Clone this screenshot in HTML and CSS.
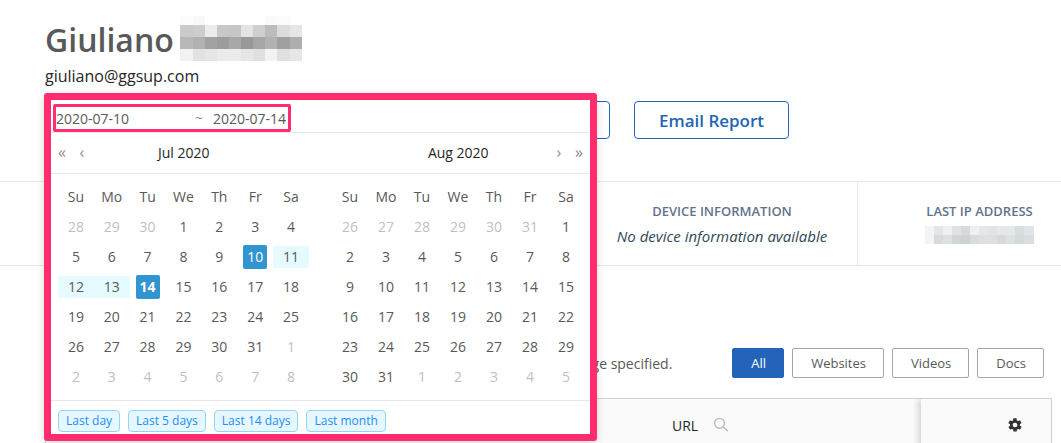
FILE: index.html
```html
<!DOCTYPE html>
<html lang="en">
<head>
<meta charset="utf-8">
<title>Giuliano</title>
<link rel="stylesheet" href="styles.css">
</head>
<body>
<header class="profile">
  <div class="name-row">
    <h1>Giuliano</h1>
    <svg class="redacted-name" width="122" height="45" viewBox="0 0 122 45" shape-rendering="crispEdges" aria-hidden="true"></svg>
  </div>
  <p class="email">giuliano@ggsup.com</p>
  <div class="actions">
    <button class="btn-outline" type="button" aria-label="Report"></button>
    <button class="btn-outline" type="button">Email Report</button>

    <div class="picker">
      <div class="picker-inputs">
        <div class="range">
          <input type="text" value="2020-07-10" aria-label="Start date">
          <span class="tilde">~</span>
          <input type="text" value="2020-07-14" aria-label="End date">
        </div>
      </div>
      <div class="picker-header">
        <div class="month-head">
          <button type="button" aria-label="Previous year">«</button>
          <button type="button" aria-label="Previous month">‹</button>
          <span class="month">Jul 2020</span>
        </div>
        <div class="month-head month-head-right">
          <span class="month">Aug 2020</span>
          <button type="button" aria-label="Next month">›</button>
          <button type="button" aria-label="Next year">»</button>
        </div>
      </div>
      <div class="picker-body">
        <table class="calendar" id="cal-left"></table>
        <table class="calendar" id="cal-right"></table>
      </div>
      <div class="picker-footer">
        <button class="tag" type="button">Last day</button>
        <button class="tag" type="button">Last 5 days</button>
        <button class="tag" type="button">Last 14 days</button>
        <button class="tag" type="button">Last month</button>
      </div>
    </div>
  </div>
</header>

<section class="stats">
  <div class="stat"></div>
  <div class="stat">
    <h2>DEVICE INFORMATION</h2>
    <p>No device information available</p>
  </div>
  <div class="stat stat-ip">
    <h2>LAST IP ADDRESS</h2>
    <svg class="redacted-ip" width="109" height="18" viewBox="0 0 109 18" shape-rendering="crispEdges" aria-hidden="true"></svg>
  </div>
</section>

<section class="history">
  <div class="toolbar">
    <p>ge specified.</p>
    <div class="filters">
      <button class="filter active" type="button">All</button>
      <button class="filter" type="button">Websites</button>
      <button class="filter" type="button">Videos</button>
      <button class="filter" type="button">Docs</button>
    </div>
  </div>
  <div class="grid-head">
    <div class="col-url">
      <span>URL</span>
      <svg width="16" height="16" viewBox="0 0 16 16" fill="none" stroke="#bbb" stroke-width="1.4">
        <circle cx="6.500" cy="6.300" r="4.900"/>
        <path d="M10.1 9.8L15 14.2"/>
      </svg>
    </div>
    <div class="col-settings">
      <svg width="16" height="16" viewBox="0 0 24 24" fill="#333">
        <path d="M19.4 13c0-.3.1-.6.1-1s0-.7-.1-1l2.1-1.6c.2-.2.2-.4.1-.6l-2-3.5c-.1-.2-.4-.3-.6-.2l-2.5 1c-.5-.4-1.1-.7-1.7-1l-.4-2.6c0-.3-.2-.5-.5-.5h-4c-.2 0-.4.2-.5.4l-.4 2.7c-.6.2-1.1.6-1.7 1l-2.5-1c-.2-.1-.5 0-.6.2l-2 3.5c-.1.2-.1.5.1.6L4.6 11c0 .3-.1.6-.1 1s0 .7.1 1l-2.1 1.6c-.2.2-.2.4-.1.6l2 3.5c.1.2.4.3.6.2l2.5-1c.5.4 1.1.7 1.7 1l.4 2.6c0 .2.2.4.5.4h4c.2 0 .5-.2.5-.4l.4-2.6c.6-.3 1.2-.6 1.7-1l2.5 1c.2.1.5 0 .6-.2l2-3.5c.1-.2.1-.5-.1-.6L19.4 13zM12 15.5a3.5 3.5 0 1 1 0-7 3.5 3.5 0 0 1 0 7z"/>
      </svg>
    </div>
  </div>
</section>

<script>
const WEEKDAYS = ['Su', 'Mo', 'Tu', 'We', 'Th', 'Fr', 'Sa'];

// month is zero based, from/to mark the selected range
function renderCalendar(id, year, month, from, to) {
  const first = new Date(year, month, 1);
  let html = '<thead><tr>' + WEEKDAYS.map(d => `<th scope="col">${d}</th>`).join('') + '</tr></thead><tbody>';
  for (let week = 0; week < 6; week++) {
    html += '<tr>';
    for (let day = 0; day < 7; day++) {
      const date = new Date(year, month, 1 - first.getDay() + week * 7 + day);
      const n = date.getDate();
      let cls = '';
      if (date.getMonth() !== month) cls = 'other';
      else if (n === from) cls = 'start';
      else if (n === to) cls = 'end';
      else if (n > from && n < to) cls = 'in-range';
      html += `<td class="${cls}"><button type="button">${n}</button></td>`;
    }
    html += '</tr>';
  }
  document.getElementById(id).innerHTML = html + '</tbody>';
}

// rows of colours, drawn as mosaic cells; column edges and row edges in px
function renderMosaic(selector, xs, ys, rows) {
  let html = '';
  rows.forEach((row, r) => row.split(' ').forEach((c, i) => {
    html += `<rect x="${xs[i]}" y="${ys[r]}" width="${xs[i + 1] - xs[i]}" height="${ys[r + 1] - ys[r]}" fill="#${c}"/>`;
  }));
  document.querySelector(selector).innerHTML = html;
}

renderCalendar('cal-left', 2020, 6, 10, 14);
renderCalendar('cal-right', 2020, 7);

renderMosaic('.redacted-name', [0, 13, 25, 37, 49, 61, 73, 85, 97, 110, 122], [0, 9, 21, 33, 45], [
  'fcfcfc f8f8f8 fff fff fff fff fff fafafa fcfcfc fff',
  'cacaca cdcdcd ececec c8c8c8 c6c6c6 e4e4e4 d0d0d0 bcbcbc dcdcdc e6e6e6',
  'b8b8ba b2b2b4 a2a2a4 9c9c9e a8a8aa 989899 a6a6a8 b2b2b4 a0a0a2 aeaeaf',
  'f2f2f2 e2e2e2 e6e6e6 ebebeb ebebeb e6e6e6 e0e0e0 f2f2f2 e0e0e0 e6e6e6'
]);
renderMosaic('.redacted-ip', [0, 9, 18, 27, 36, 45, 54, 63, 72, 81, 90, 99, 109], [0, 9, 18], [
  'f3f5f5 e2e6e7 eef0f1 e0e3e5 d6dadd eef0f1 e4e7e8 e0e4e6 e6e9ea e4e8e9 d8dcdf e2e5e7',
  'f3f5f5 d6dbde dce0e2 d0d5d8 cdd2d6 d8dcdf dce0e2 dce0e2 d6dadd dce0e2 d4d9dc dadee0'
]);
</script>
</body>
</html>
```
FILE: styles.css
```css
* {
  box-sizing: border-box;
}
body {
  margin: 0;
  font-family: "Open Sans", "Noto Sans", sans-serif;
  font-size: 14px;
  color: #595959;
  background-color: white;
  overflow: hidden;
}
h1, h2, p {
  margin: 0;
}
button, input {
  font-family: inherit;
  font-size: inherit;
  color: inherit;
  margin: 0;
  padding: 0;
}
button {
  cursor: pointer;
}

/* profile header */
.profile {
  padding: 16px 45px 0;
}
.name-row {
  display: flex;
  gap: 6px;
  height: 48px;
}
h1 {
  font-size: 32px;
  line-height: 48px;
  font-weight: 600;
  color: #595959;
}
.email {
  font-size: 16px;
  line-height: 24px;
  color: #262626;
}
.actions {
  position: relative;
  display: flex;
  gap: 24px;
  padding: 13px 0 42px 410px;
}
.btn-outline {
  width: 155px;
  height: 38px;
  border: 1px solid #2364b8;
  border-radius: 4px;
  background-color: white;
  color: #2364b8;
  font-size: 17px;
  font-weight: 600;
}

/* date range popup, lies over the page */
.picker {
  position: absolute;
  z-index: 10;
  top: 5px;
  left: -1px;
  width: 553px;
  border: 7px solid #ff2d6d;
  border-radius: 3px;
  background-color: white;
  box-shadow: 0 2px 8px rgba(0,0,0,0.15);
}
.picker-inputs {
  padding: 4px 2px 0;
  border-bottom: 1px solid #e8e8e8;
}
.range {
  display: flex;
  align-items: center;
  width: 238px;
  height: 28px;
  border: 3px solid #ff2d6d;
  border-radius: 2px;
}
.range input {
  width: 75px;
  height: 22px;
  border: none;
  outline: none;
  background: none;
}
.tilde {
  flex: 1;
  padding-right: 10px;
  text-align: right;
  line-height: 22px;
  color: #8c8c8c;
}
.picker-header {
  display: flex;
  height: 41px;
  border-bottom: 1px solid #e8e8e8;
}
.month-head {
  flex: 1;
  display: flex;
  align-items: center;
  padding: 0 6px 2px;
}
.month-head button {
  width: 10px;
  border: none;
  background: none;
  font-size: 16px;
  line-height: 24px;
  color: #8c8c8c;
}
.month-head button + button {
  margin-left: 10px;
}
.month {
  flex: 1;
  padding-right: 34px;
  text-align: center;
  color: #262626;
}
.month-head-right .month {
  padding: 0 0 0 36px;
}
.picker-body {
  display: flex;
  justify-content: space-between;
  padding: 8px 6px 8px 7px;
}
.calendar {
  width: 252px;
  table-layout: fixed;
  border-collapse: collapse;
}
#cal-left {
  width: 251px;
}
.calendar th, .calendar td {
  height: 30px;
  padding: 0;
  text-align: center;
  font-weight: 400;
}
.calendar th {
  padding-bottom: 2px;
}
.calendar td button {
  display: block;
  width: 24px;
  height: 24px;
  margin: 0 auto;
  border: none;
  border-radius: 2px;
  background: none;
  line-height: 24px;
}
.calendar .other button {
  color: #bfbfbf;
}
.calendar .in-range button {
  width: 100%;
  height: 22px;
  border-radius: 0;
  background-color: #e6fbff;
  line-height: 22px;
}
.calendar .start button, .calendar .end button {
  background-color: #3195d0;
  color: white;
  font-weight: 500;
}
.calendar .end button {
  font-weight: 700;
}
.picker-footer {
  display: flex;
  gap: 8px;
  padding: 9px 7px 2px;
  border-top: 1px solid #e8e8e8;
}
.tag {
  height: 22px;
  padding: 0 7px;
  border: 1px solid #91d5ff;
  border-radius: 4px;
  background-color: #e6f7ff;
  color: #1890ff;
  font-size: 12px;
  line-height: 20px;
}

/* stats */
.stats {
  display: grid;
  grid-template-columns: 1fr 270px 204px;
  height: 85px;
  border-top: 1px solid #e8e8e8;
  border-bottom: 1px solid #e8e8e8;
}
.stat {
  padding-top: 19px;
  text-align: center;
}
.stat h2 {
  font-size: 13px;
  line-height: 20px;
  font-weight: 600;
  color: #5f738c;
}
.stat p {
  margin-top: 4px;
  font-size: 15px;
  line-height: 22px;
  font-style: italic;
  color: #2f4858;
}
.stat-ip {
  padding-left: 40px;
  border-left: 1px solid #e8e8e8;
}
.redacted-ip {
  display: block;
  margin: 5px auto 0;
}

/* history */
.history {
  padding: 82px 9px 0 45px;
}
.toolbar {
  display: flex;
  justify-content: flex-end;
  align-items: center;
  gap: 60px;
  padding-right: 8px;
}
.filters {
  display: flex;
  gap: 8px;
}
.filter {
  height: 30px;
  padding: 0 17px 0 18px;
  border: 1px solid #a6a6a6;
  border-radius: 2px;
  background-color: white;
  font-size: 13px;
}
.filter.active {
  border-color: #2364b8;
  background-color: #2364b8;
  color: white;
  font-weight: 500;
}
.grid-head {
  display: flex;
  justify-content: flex-end;
  height: 54px;
  margin-top: 20px;
  border: 1px solid #d0d0d0;
  background-color: #fafafa;
  overflow: hidden;
}
.col-url {
  width: 249px;
  display: flex;
  align-items: center;
  gap: 15px;
  color: #262626;
}
.col-settings {
  width: 130px;
  display: flex;
  align-items: center;
  justify-content: flex-end;
  padding-right: 28px;
  background-color: #fafafa;
  box-shadow: -3px 0 6px rgba(0,0,0,0.15);
}
```
